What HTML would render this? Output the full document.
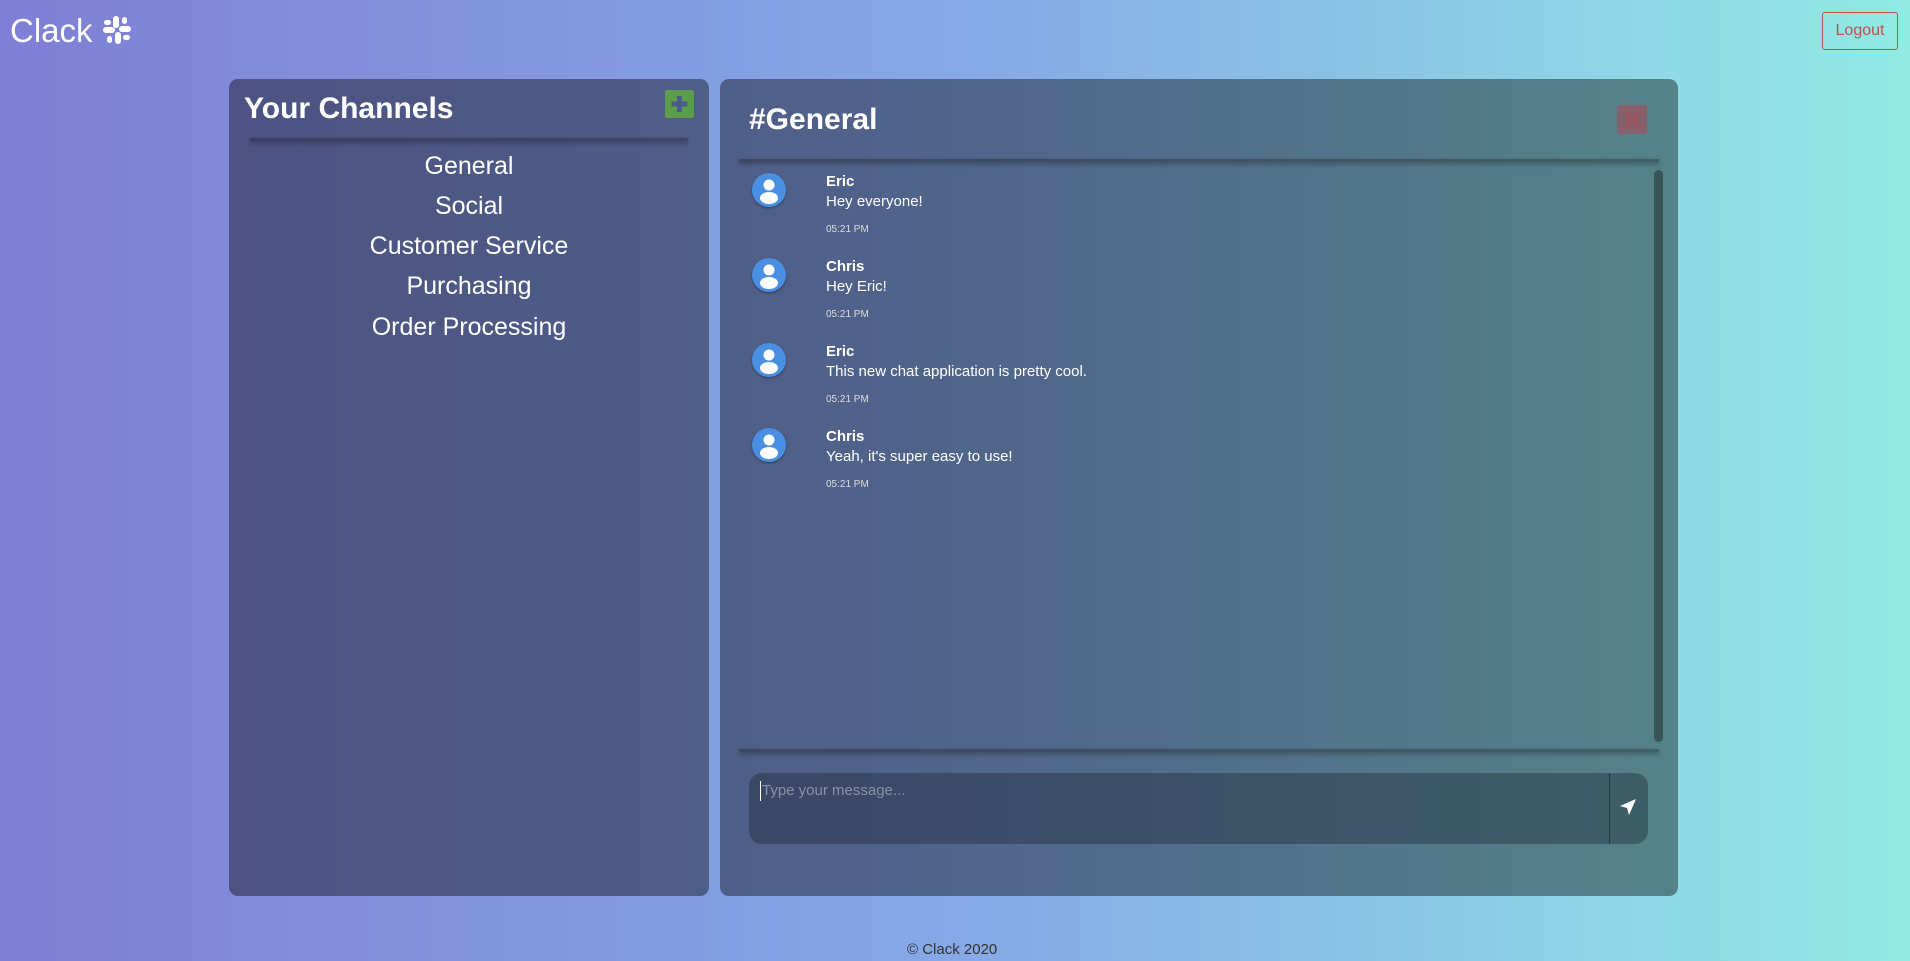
<!DOCTYPE html>
<html><head><meta charset="utf-8"><style>
*{box-sizing:border-box;margin:0;padding:0}
html,body{width:1910px;height:961px;overflow:hidden}
body{font-family:"Liberation Sans",sans-serif;background:linear-gradient(90deg,#7f7fd5 0%,#86a8e7 50%,#91eae4 100%);color:#fff;position:relative}
.abs{position:absolute;white-space:nowrap}
.logo{left:10px;top:12px;font-size:33px;color:#fff}
.logout{left:1822px;top:12px;width:76px;height:38px;border:1px solid #c0504d;border-radius:3px;color:#c0504d;font-size:16px;line-height:36px;text-align:center}
.panel{background:rgba(0,0,0,0.4);border-radius:9px}
.left{left:229px;top:79px;width:480px;height:817px}
.right{left:720px;top:79px;width:958px;height:817px}
.h1{font-weight:bold;font-size:30px}
.div{height:3px;background:rgba(0,0,0,0.25);box-shadow:0 2px 4px rgba(0,0,0,0.35)}
.ch{left:229px;width:480px;text-align:center;font-size:25px}
.av{width:34px;height:34px;border-radius:50%;background:#4a90e2;box-shadow:0 1px 2px rgba(0,0,0,.4);overflow:hidden}
.name{font-weight:bold;font-size:15px}
.msg{font-size:15px}
.time{font-size:10px;color:#ddd}
</style></head><body>
<div class="abs logo">Clack <svg width="30" height="30" viewBox="0 0 30 30" style="vertical-align:-3px"><g fill="#fff"><rect x="11" y="1" width="6" height="12" rx="3"/><rect x="1" y="12" width="12" height="6" rx="3"/><rect x="13" y="17" width="6" height="12" rx="3"/><rect x="17" y="11" width="12" height="6" rx="3"/><rect x="2" y="5" width="7" height="5" rx="2.5"/><rect x="21" y="20" width="7" height="5" rx="2.5"/><rect x="20" y="2" width="5" height="7" rx="2.5"/><rect x="5" y="21" width="5" height="7" rx="2.5"/></g></svg></div>
<div class="abs logout">Logout</div>

<div class="abs panel left"></div>
<div class="abs h1" style="left:244px;top:92px">Your Channels</div>
<div class="abs" style="left:665px;top:90px;width:29px;height:28px;background:#5a9e4b;border-radius:2px"><svg width="29" height="28"><path d="M14.5 6v16M6.5 14h16" stroke="#4a5a8a" stroke-width="5"/></svg></div>
<div class="abs div" style="left:250px;top:138px;width:438px"></div>
<div class="abs ch" style="top:152px">General</div>
<div class="abs ch" style="top:192px">Social</div>
<div class="abs ch" style="top:232px">Customer Service</div>
<div class="abs ch" style="top:272px">Purchasing</div>
<div class="abs ch" style="top:313px">Order Processing</div>

<div class="abs panel right"></div>
<div class="abs h1" style="left:749px;top:103px">#General</div>
<div class="abs" style="left:1617px;top:105px;width:30px;height:29px;background:#86606a;border-radius:2px"><svg width="30" height="29"><path d="M8 7l14 15M22 7L8 22" stroke="#9a5560" stroke-width="4"/></svg></div>
<div class="abs div" style="left:739px;top:159px;width:920px"></div>
<div class="abs" style="left:1654px;top:170px;width:9px;height:572px;background:#3a5558;border-radius:5px"></div>

<div class="abs" style="left:752px;top:173px">
<div style="position:relative;height:85px"><div class="abs av"><svg width="34" height="34"><circle cx="17" cy="12" r="5.5" fill="#fff"/><ellipse cx="17" cy="25" rx="9" ry="6" fill="#fff"/></svg></div>
<div class="abs name" style="left:74px;top:0">Eric</div><div class="abs msg" style="left:74px;top:20px">Hey everyone!</div><div class="abs time" style="left:74px;top:51px">05:21 PM</div></div>
<div style="position:relative;height:85px"><div class="abs av"><svg width="34" height="34"><circle cx="17" cy="12" r="5.5" fill="#fff"/><ellipse cx="17" cy="25" rx="9" ry="6" fill="#fff"/></svg></div>
<div class="abs name" style="left:74px;top:0">Chris</div><div class="abs msg" style="left:74px;top:20px">Hey Eric!</div><div class="abs time" style="left:74px;top:51px">05:21 PM</div></div>
<div style="position:relative;height:85px"><div class="abs av"><svg width="34" height="34"><circle cx="17" cy="12" r="5.5" fill="#fff"/><ellipse cx="17" cy="25" rx="9" ry="6" fill="#fff"/></svg></div>
<div class="abs name" style="left:74px;top:0">Eric</div><div class="abs msg" style="left:74px;top:20px">This new chat application is pretty cool.</div><div class="abs time" style="left:74px;top:51px">05:21 PM</div></div>
<div style="position:relative;height:85px"><div class="abs av"><svg width="34" height="34"><circle cx="17" cy="12" r="5.5" fill="#fff"/><ellipse cx="17" cy="25" rx="9" ry="6" fill="#fff"/></svg></div>
<div class="abs name" style="left:74px;top:0">Chris</div><div class="abs msg" style="left:74px;top:20px">Yeah, it's super easy to use!</div><div class="abs time" style="left:74px;top:51px">05:21 PM</div></div>
</div>

<div class="abs div" style="left:739px;top:749px;width:920px"></div>
<div class="abs" style="left:749px;top:773px;width:899px;height:71px;background:rgba(20,30,40,.35);border-radius:13px"></div>
<div class="abs" style="left:1609px;top:773px;width:1px;height:71px;background:rgba(0,0,0,.4)"></div>
<div class="abs" style="left:760px;top:781px;width:1px;height:20px;background:#fff"></div>
<div class="abs" style="left:762px;top:782px;font-size:15px;color:#8a93a6">Type your message...</div>
<svg class="abs" style="left:1619px;top:798px" width="18" height="18" viewBox="0 0 18 18"><path d="M17 1L1 8l7 2 2 7z" fill="#fff"/></svg>

<div class="abs" style="left:907px;top:941px;font-size:15px;color:#333">© Clack 2020</div>
</body></html>
